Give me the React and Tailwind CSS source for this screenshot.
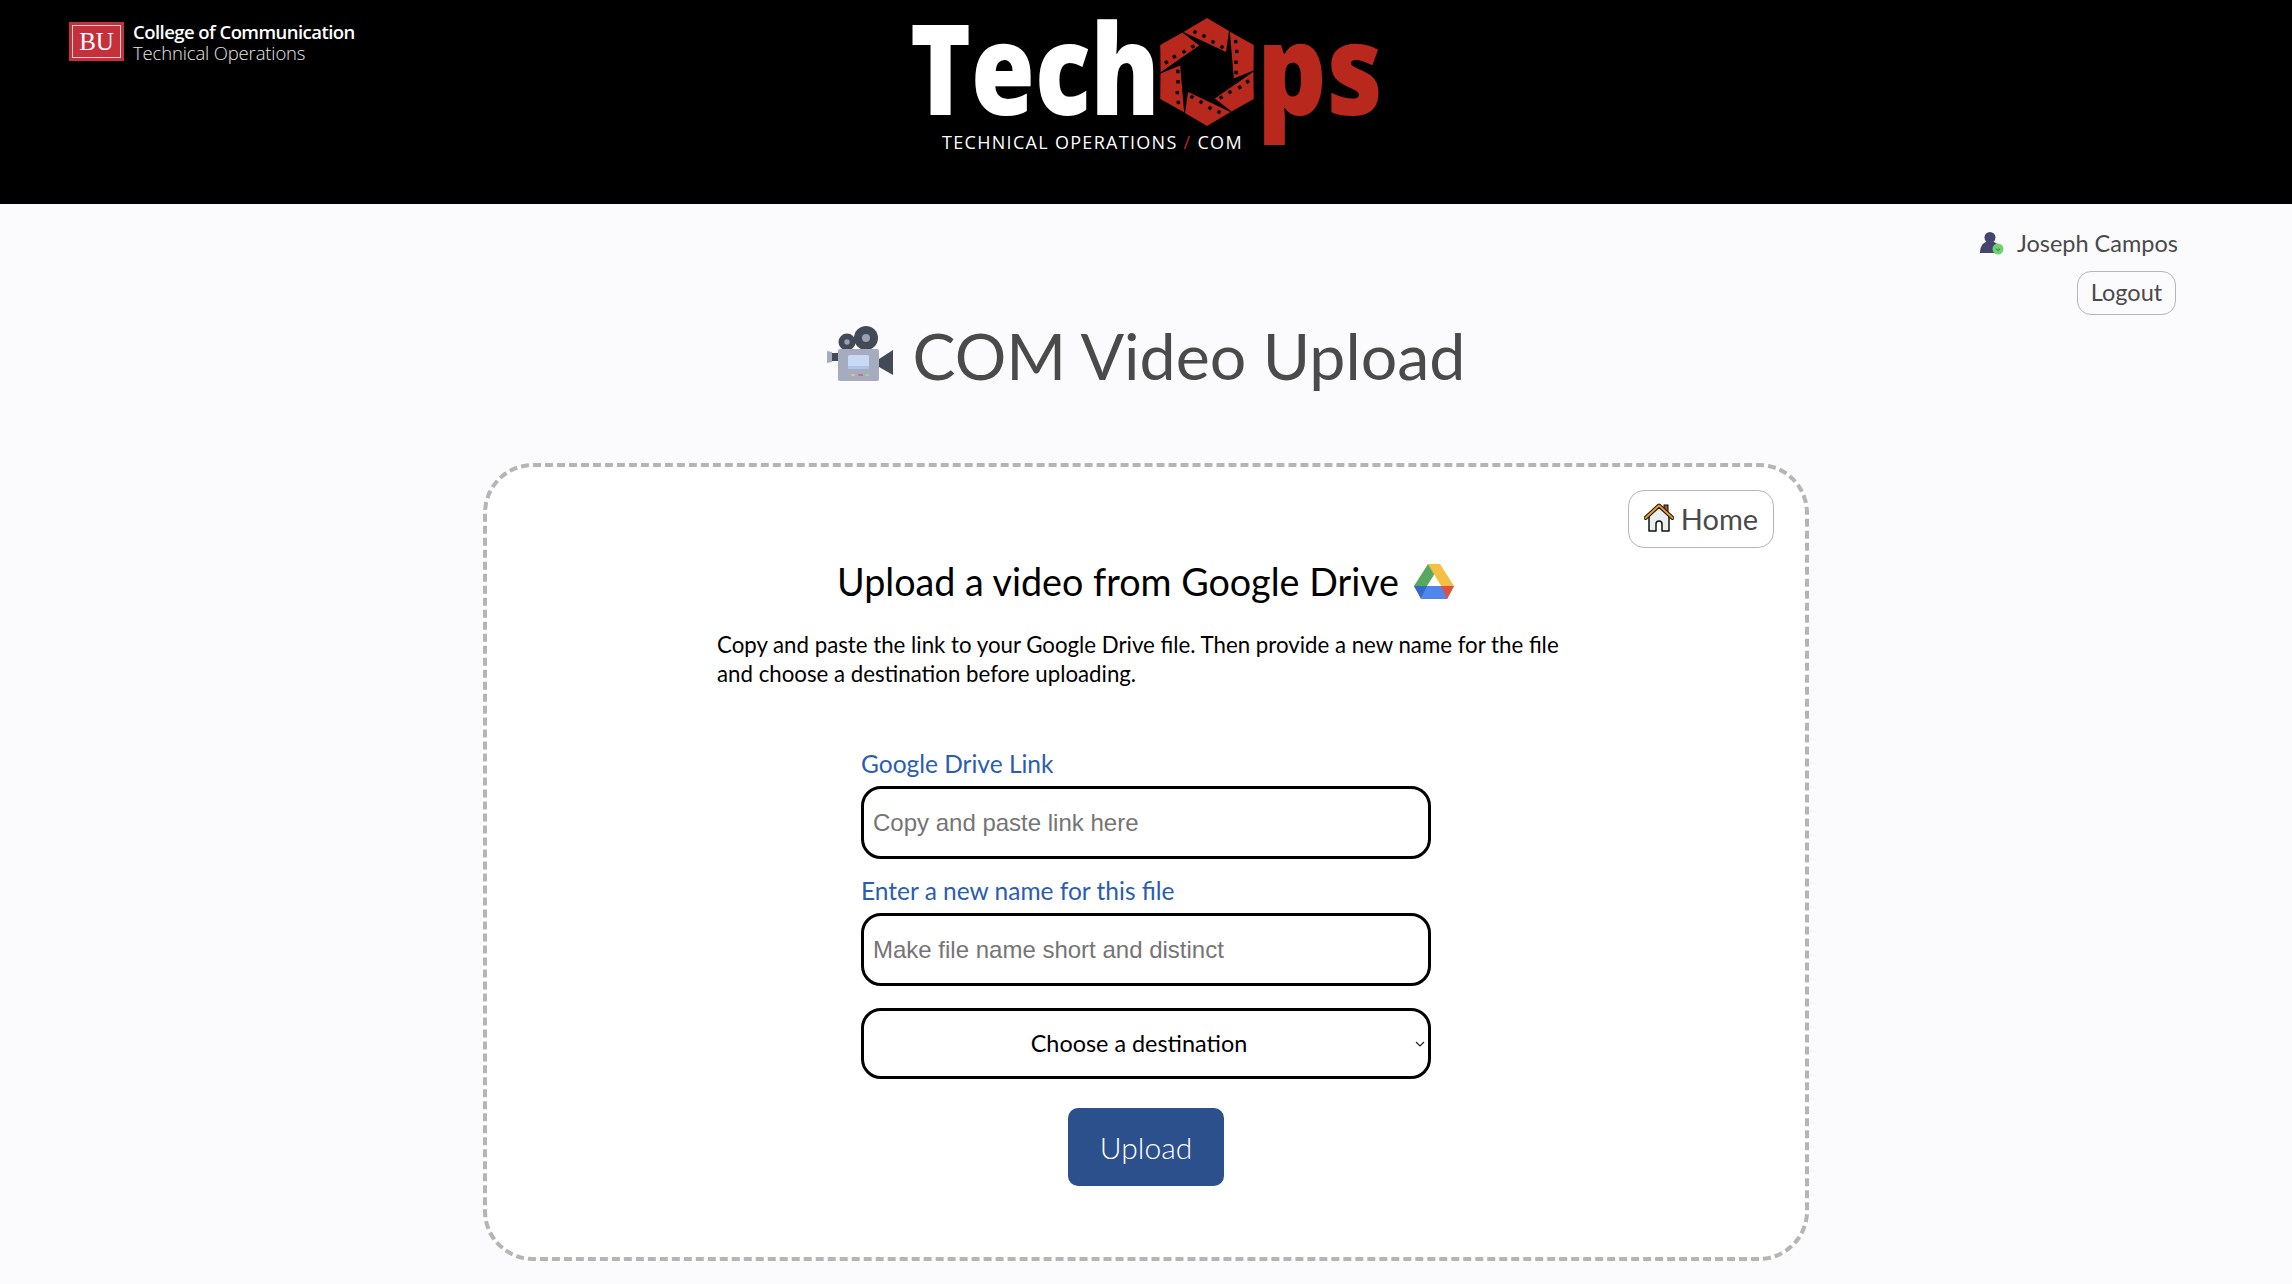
import React from "react";

const Blades = () => {
  const angles = [0, 60, 120, 180, 240, 300];
  return (
    <svg width="94" height="108" viewBox="-47 -54 94 108" className="shrink-0">
      {angles.map((a) => (
        <g key={a} transform={`rotate(${a})`}>
          <polygon points="-23.5,-40 0,-54 22,-41 19,-20" fill="#b9281c" />
          {[[-12, -40], [-3, -36], [6, -30], [15, -25]].map(([x, y]) => (
            <rect key={x} x={x - 1.7} y={y - 1.7} width="3.4" height="3.4" fill="#000" transform={`rotate(28 ${x} ${y})`} />
          ))}
        </g>
      ))}
    </svg>
  );
};

const BU = () => (
  <div className="w-[55px] h-[39px] bg-[#c5303a] flex items-center justify-center p-[3px]">
    <div className="w-full h-full border border-[#f0d0d0] flex items-center justify-center text-white text-[25px] leading-none font-['Liberation_Serif',serif]">BU</div>
  </div>
);

const Camera = () => (
  <svg width="68" height="60" viewBox="0 0 68 60" className="shrink-0">
    <circle cx="39" cy="13" r="12" fill="#434a57" />
    <circle cx="39" cy="13" r="4" fill="#9a9fb4" />
    <circle cx="20" cy="17" r="8.5" fill="#434a57" />
    <circle cx="20" cy="17" r="2.7" fill="#9a9fb4" />
    <polygon points="0,26 5,27 5,37 0,38" fill="#a6abc0" />
    <rect x="5" y="28" width="6" height="8" fill="#434a57" />
    <rect x="11" y="24" width="41" height="32" rx="2" fill="#a6abc0" />
    <rect x="21" y="30" width="21" height="14" rx="1.5" fill="#c7d9f5" />
    <rect x="21" y="41" width="21" height="3" fill="#aec4e8" />
    <rect x="24" y="49" width="4" height="2" rx="1" fill="#e3c466" />
    <rect x="31" y="49" width="5" height="2" rx="1" fill="#d86a78" />
    <rect x="38" y="49" width="4" height="2" rx="1" fill="#a4d67a" />
    <polygon points="52,34 66,25 66,50 52,42" fill="#434a57" />
  </svg>
);

const Person = () => (
  <svg width="24" height="24" viewBox="0 0 24 24" className="shrink-0">
    <circle cx="10" cy="6.5" r="5.5" fill="#44446f" />
    <path d="M0 22c0-7 3-10 6-11h8c3 1 6 4 6 11z" fill="#44446f" />
    <circle cx="18" cy="18" r="5.5" fill="#6fd26f" />
    <path d="M15.8 17.5l2.2 2 2.2-2" stroke="#2f6f3a" strokeWidth="1" fill="none" />
  </svg>
);

const House = () => (
  <svg width="30" height="30" viewBox="0 0 30 30" className="shrink-0">
    <rect x="20" y="2" width="4" height="9" fill="#a0522d" stroke="#111" strokeWidth="1" />
    <path d="M5 13v15h7v-7a3 3 0 0 1 6 0v7h7V13L15 4z" fill="#e9efef" stroke="#111" strokeWidth="1.5" strokeLinejoin="round" />
    <path d="M1.5 15L15 2.5 28.5 15" fill="none" stroke="#111" strokeWidth="4" strokeLinecap="round" strokeLinejoin="round" />
    <path d="M1.5 15L15 2.5 28.5 15" fill="none" stroke="#ec9a26" strokeWidth="2" strokeLinecap="round" strokeLinejoin="round" />
  </svg>
);

const Drive = () => (
  <svg width="40" height="36" viewBox="0 0 40 36" className="shrink-0">
    <polygon points="14,0 26,0 20,11 " fill="#3b8a4e" />
    <polygon points="14,0 20,11 7,34 0,22" fill="#56a85e" />
    <polygon points="26,0 40,22 27,22 14,0" fill="#f4bf42" />
    <polygon points="13,22 40,22 33,35 7,35" fill="#4f86ec" />
    <polygon points="0,22 13,22 7,35" fill="#3568c8" />
    <polygon points="27,22 40,22 33,35" fill="#dd5140" />
    <polygon points="20,11 27,22 13,22" fill="#fff" />
  </svg>
);

const labelCls = "block text-[24.5px] leading-[28px] text-[#2a5db0]";
const inputCls = "block w-full h-[73px] border-[3px] border-black rounded-[20px] bg-white px-[9px] text-[24px] font-['Liberation_Sans',sans-serif] placeholder:text-[#757575] outline-none";

export default function App() {
  return (
    <div className="min-h-[1284px] bg-[#fbfbfe] font-['Lato',sans-serif] overflow-hidden">
      <header className="h-[204px] bg-black grid grid-cols-[1fr_auto_1fr]">
        <div className="pl-[69px] pt-[22px] flex items-start gap-[9px] h-fit">
          <BU />
          <div className="text-white leading-[21px] -mt-px font-['Open_Sans',sans-serif]">
            <div className="text-[18.5px] font-semibold tracking-[-0.55px]">College of Communication</div>
            <div className="text-[18.5px] font-light text-[#e5e5e5] tracking-[-0.15px]">Technical Operations</div>
          </div>
        </div>
        <div className="relative w-[472px] h-[204px] pt-[18px]">
          <div className="flex items-start h-[108px]">
            <div className="w-[305px] -mr-[55px] -mt-[15px] text-white text-[126px] leading-none font-extrabold font-['Open_Sans',sans-serif] scale-x-[0.82] origin-left whitespace-nowrap">Tech</div>
            <Blades />
            <div className="w-[145px] -mr-[25px] ml-[3px] -mt-[15px] text-[#b9281c] text-[126px] leading-none font-extrabold font-['Open_Sans',sans-serif] scale-x-[0.86] origin-left whitespace-nowrap">ps</div>
          </div>
          <div className="absolute left-[32px] top-[132px] text-white text-[18px] leading-[20px] tracking-[1.3px] font-['Open_Sans',sans-serif] whitespace-nowrap">
            TECHNICAL OPERATIONS <span className="text-[#b9281c]">/</span> COM
          </div>
        </div>
        <div />
      </header>

      <section className="h-[259px] grid grid-cols-[1fr_auto_1fr]">
        <div />
        <div className="pt-[121px] flex items-start gap-[18px] text-[#4a4a4a]">
          <Camera />
          <h1 className="text-[64.5px] leading-[72px] font-normal -mt-[6px]">COM Video Upload</h1>
        </div>
        <div className="flex flex-col items-end pt-[25px] pr-[114px] text-[#4a4a4a]">
          <div className="flex items-center gap-[13px] text-[23.5px] leading-[28px]">
            <Person />
            <span>Joseph Campos</span>
          </div>
          <button className="mt-[14px] mr-[2px] h-[44px] w-[99px] rounded-[14px] border border-[#b5b5b5] text-[23.5px] leading-none bg-transparent">Logout</button>
        </div>
      </section>

      <main className="w-[1326px] h-[798px] mx-auto bg-white border-[4px] border-dashed border-[#b5b5b5] rounded-[50px] pt-[23px] px-[31px]">
        <div className="flex justify-end">
          <button className="h-[58px] w-[146px] rounded-[16px] border border-[#b5b5b5] flex items-center justify-center gap-[7px] text-[#4a4a4a] text-[29px] leading-none pb-[2px]">
            <House />
            <span>Home</span>
          </button>
        </div>
        <div className="mt-[12px] flex items-center justify-center gap-[15px] h-[44px] pr-[1px]">
          <h2 className="text-[37.7px] leading-[44px] text-black">Upload a video from Google Drive</h2>
          <Drive />
        </div>
        <p className="mt-[26px] ml-[199px] w-[860px] text-[22.25px] leading-[29px] text-black">
          Copy and paste the link to your Google Drive file. Then provide a new name for the file and choose a destination before uploading.
        </p>
        <form className="mt-[62px] w-[570px] mx-auto">
          <label className={labelCls}>Google Drive Link</label>
          <input className={`${inputCls} mt-[8px]`} placeholder="Copy and paste link here" />
          <label className={`${labelCls} mt-[18px]`}>Enter a new name for this file</label>
          <input className={`${inputCls} mt-[8px]`} placeholder="Make file name short and distinct" />
          <div className="relative mt-[22px]">
            <select className="block appearance-none w-full h-[71px] border-[3px] border-black rounded-[20px] bg-white pr-[14px] text-[23.4px] text-center text-black font-['Lato',sans-serif] outline-none">
              <option>Choose a destination</option>
            </select>
            <svg width="10" height="6" viewBox="0 0 10 6" className="absolute right-[6px] top-[33px]">
              <path d="M1 1l4 4 4-4" fill="none" stroke="#222" strokeWidth="1.2" />
            </svg>
          </div>
          <div className="flex justify-center mt-[29px]">
            <button type="button" className="w-[156px] h-[78px] bg-[#2c508c] rounded-[10px] text-white text-[30px] font-light leading-none">Upload</button>
          </div>
        </form>
      </main>
    </div>
  );
}
